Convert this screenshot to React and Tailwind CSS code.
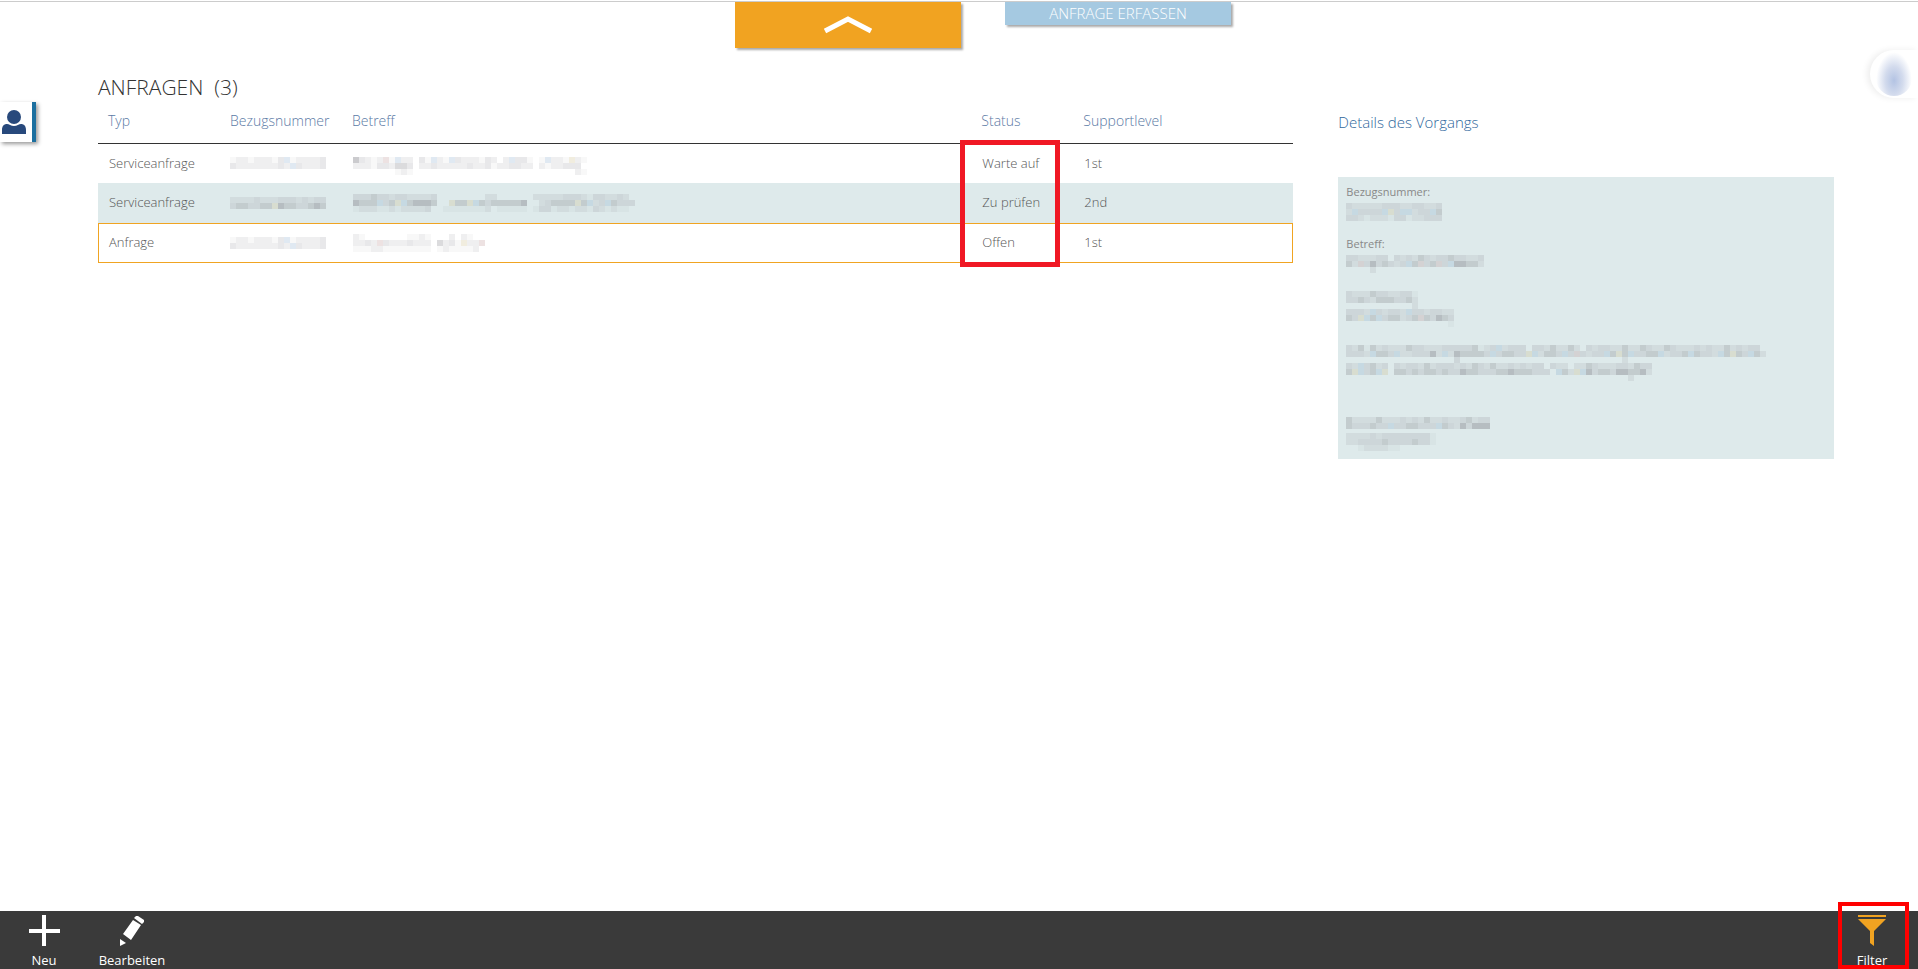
const shades = {
  1: '#8080880f',
  2: '#80808820',
  3: '#8080882e',
  4: '#80808848',
  5: '#7070785c',
  b: '#7aa0c83c',
  r: '#b88a8a40',
  y: '#c8b88040',
}

// censored text, one character per 6px block
const Mosaic = ({ rows, className = '' }) => {
  const cols = Math.max(...rows.map((row) => row.length))
  return (
    <svg
      width={cols * 6}
      height={rows.length * 6}
      className={`block ${className}`}
      shapeRendering="crispEdges"
      aria-hidden="true"
    >
      {rows.map((row, y) =>
        row.split('').map((c, x) =>
          shades[c] ? (
            <rect key={`${x}-${y}`} x={x * 6} y={y * 6} width="6" height="6" fill={shades[c]} />
          ) : null
        )
      )}
    </svg>
  )
}

const requests = [
  {
    type: 'Serviceanfrage',
    number: ['122122213b122223', '3222222232b32223'],
    subject: [
      '',
      '53212r1b22 31b21b3222132 2b331 1b221y21',
      '2221332443 2232222232231223322 2122333 ',
      '       121                           21',
    ],
    status: 'Warte auf',
    level: '1st',
  },
  {
    type: 'Serviceanfrage',
    number: ['2222322233323233', '3443344y54433454'],
    subject: [
      '33343323322223        22      2222233321332232',
      '5444b34yb45554  y44yb43444445  234444y4b23b4333',
      '1222112122223  11111112 11111 1331221221321211',
    ],
    status: 'Zu prüfen',
    level: '2nd',
    highlighted: true,
  },
  {
    type: 'Anfrage',
    number: ['122122213b122223', '3222222232b32223'],
    subject: ['21       1121   2 21  ', '2232r32223222 4231y22r', '1112211111111 1211112 '],
    status: 'Offen',
    level: '1st',
    selected: true,
  },
]

const RequestTable = () => (
  <div className="relative">
    <table className="w-full table-fixed border-collapse text-left">
      <colgroup>
        <col className="w-[131px]" />
        <col className="w-[122px]" />
        <col />
        <col className="w-[102px]" />
        <col className="w-[211px]" />
      </colgroup>
      <thead>
        <tr className="h-[42px] border-b border-[#333] text-sm text-[#5b7aa5]">
          <th className="pb-0.5 pl-2.5 font-light">Typ</th>
          <th className="pb-0.5 pl-px font-light">Bezugsnummer</th>
          <th className="pb-0.5 pl-px font-light">Betreff</th>
          <th className="pb-0.5 pl-px font-light">Status</th>
          <th className="pb-0.5 pl-px font-light">Supportlevel</th>
        </tr>
      </thead>
      <tbody>
        {requests.map((r, i) => (
          <tr
            key={i}
            className={`h-10 text-[13px] text-[#555] ${r.highlighted ? 'bg-[#deeaeb]' : ''} ${
              r.selected ? 'outline outline-1 -outline-offset-1 outline-[#f0a422]' : ''
            }`}
          >
            <td className="pl-[11px]">{r.type}</td>
            <td className="pl-px"><Mosaic rows={r.number} /></td>
            <td className="pl-0.5"><Mosaic rows={r.subject} /></td>
            <td className="pl-0.5">{r.status}</td>
            <td className="pl-0.5">{r.level}</td>
          </tr>
        ))}
      </tbody>
    </table>
    <div className="pointer-events-none absolute -bottom-1 right-[233px] top-[39px] w-[100px] border-5 border-[#f01824]" />
  </div>
)

const Details = () => (
  <section className="pt-[39px]">
    <h2 className="text-[15px] leading-5 text-[#2f679c]">Details des Vorgangs</h2>
    <div className="mt-[45px] h-[282px] bg-[#deeaeb] px-2 pt-1.5 text-[11px] leading-[18px] text-[#888]">
      <p className="font-normal">Bezugsnummer:</p>
      <Mosaic className="mt-0.5" rows={['3222223332233223', '2b3333by3bb233b4', '3321222133122333']} />
      <p className="mt-3.5 font-normal">Betreff:</p>
      <Mosaic
        className="mt-0.5"
        rows={['3322233 323243233433223', '42r3534323b4r34r3b55442', '    2']}
      />
      <Mosaic className="mt-[18px]" rows={['322243322331', '334324443342', '           2']} />
      <Mosaic rows={['3332b32332b3323322', '43yb4b344234r43543', '                 1']} />
      <Mosaic
        className="mt-[18px]"
        rows={[
          '3241423222433222333334123b2333 33242242 32332242243224322232322423233',
          '3332b443b2233352b2544443b34433yb2443b3r3233b4y4b3344b2334b4332b4y43b42',
          '                  3                           2',
        ]}
      />
      <Mosaic
        rows={[
          '32b3423 3233242333232432422323233 322 2243222332433',
          '4yb34by 44343443433544333445444333 b42yb53443554452',
          '                                               2',
        ]}
      />
      <Mosaic className="mt-9" rows={['422224222323242232234233', '4333433b3344333b43253555']} />
      <Mosaic className="mt-1" rows={['222232333333331', '223333433334331', '  1222211']} />
    </div>
  </section>
)

const ToolButton = ({ label, children }) => (
  <button type="button" className="flex w-[88px] flex-col items-center text-[13px] font-normal leading-[18px] text-white">
    {children}
    <span>{label}</span>
  </button>
)

export default function App() {
  return (
    <div className="relative flex min-h-screen flex-col overflow-hidden bg-white font-['Open_Sans','Noto_Sans',sans-serif] font-light text-[#333]">
      <header className="mt-px flex h-18 items-start justify-center gap-11 border-t border-[#ccc] pl-12">
        <button
          type="button"
          aria-label="Einklappen"
          className="flex h-[46px] w-[226px] items-center justify-center bg-[#f1a321] shadow-[2px_2px_2px_#aaa]"
        >
          <svg width="50" height="18" viewBox="0 0 50 18" fill="none" aria-hidden="true">
            <path d="M2 15 25 3 48 15" stroke="#fff" strokeWidth="5" />
          </svg>
        </button>
        <button
          type="button"
          className="flex h-[23px] w-[226px] items-center justify-center bg-[#a5c9e1] text-[15px] text-white shadow-[2px_2px_2px_#aaa]"
        >
          ANFRAGE ERFASSEN
        </button>
      </header>

      <main className="grid flex-1 grid-cols-[41fr_17fr] items-start gap-x-[45px] pl-[98px] pr-[84px]">
        <section>
          <h1 className="whitespace-pre text-[21px] leading-7">ANFRAGEN  (3)</h1>
          <RequestTable />
        </section>
        <Details />
      </main>

      <button
        type="button"
        aria-label="Benutzer"
        className="absolute left-0 top-[102px] flex h-10 w-9 items-center border-r-4 border-[#1b6f9f] bg-white pl-0.5 shadow-[2px_2px_4px_#999]"
      >
        <svg width="24" height="24" viewBox="0 0 24 24" fill="#28497c" aria-hidden="true">
          <circle cx="12" cy="7" r="7" />
          <path d="M0 24v-4c0-4 2-6 5-6 2 0 4 2 7 2s5-2 7-2c3 0 5 2 5 6v4z" />
        </svg>
      </button>
      <div className="absolute right-0 top-[50px] flex h-12 w-12 items-center justify-center rounded-l-full bg-white shadow-[-3px_0_6px_#eee]">
        <div className="h-11 w-9 rounded-full bg-[radial-gradient(ellipse_at_50%_65%,#b3c3e3_0%,#d3dbed_35%,#fff_70%)]" />
      </div>

      <footer className="flex h-[58px] items-start justify-between bg-[#3a3a3a] pr-0.5 pt-1">
        <div className="flex">
          <ToolButton label="Neu">
            <svg width="32" height="36" viewBox="0 0 32 36" stroke="#fff" strokeWidth="4" aria-hidden="true">
              <path d="M16 0v31M1 16h31" />
            </svg>
          </ToolButton>
          <ToolButton label="Bearbeiten">
            <svg width="26" height="36" viewBox="0 0 26 36" fill="#fff" aria-hidden="true">
              <path d="M17 1h2l6 4v2l-2 2-8-6zM14 5l8 5-10 15-8-6zM1 24l6 4-6 3z" />
            </svg>
          </ToolButton>
        </div>
        <div className="relative">
          <ToolButton label="Filter">
            <svg width="28" height="36" viewBox="0 0 28 36" fill="#f1a321" aria-hidden="true">
              <path d="M0 0h28v2H0zM0 4h28L16 16v15l-4-3V16z" />
            </svg>
          </ToolButton>
          <div className="pointer-events-none absolute -top-[13px] left-2.5 h-[67px] w-[71px] border-4 border-[#f00]" />
        </div>
      </footer>
    </div>
  )
}
